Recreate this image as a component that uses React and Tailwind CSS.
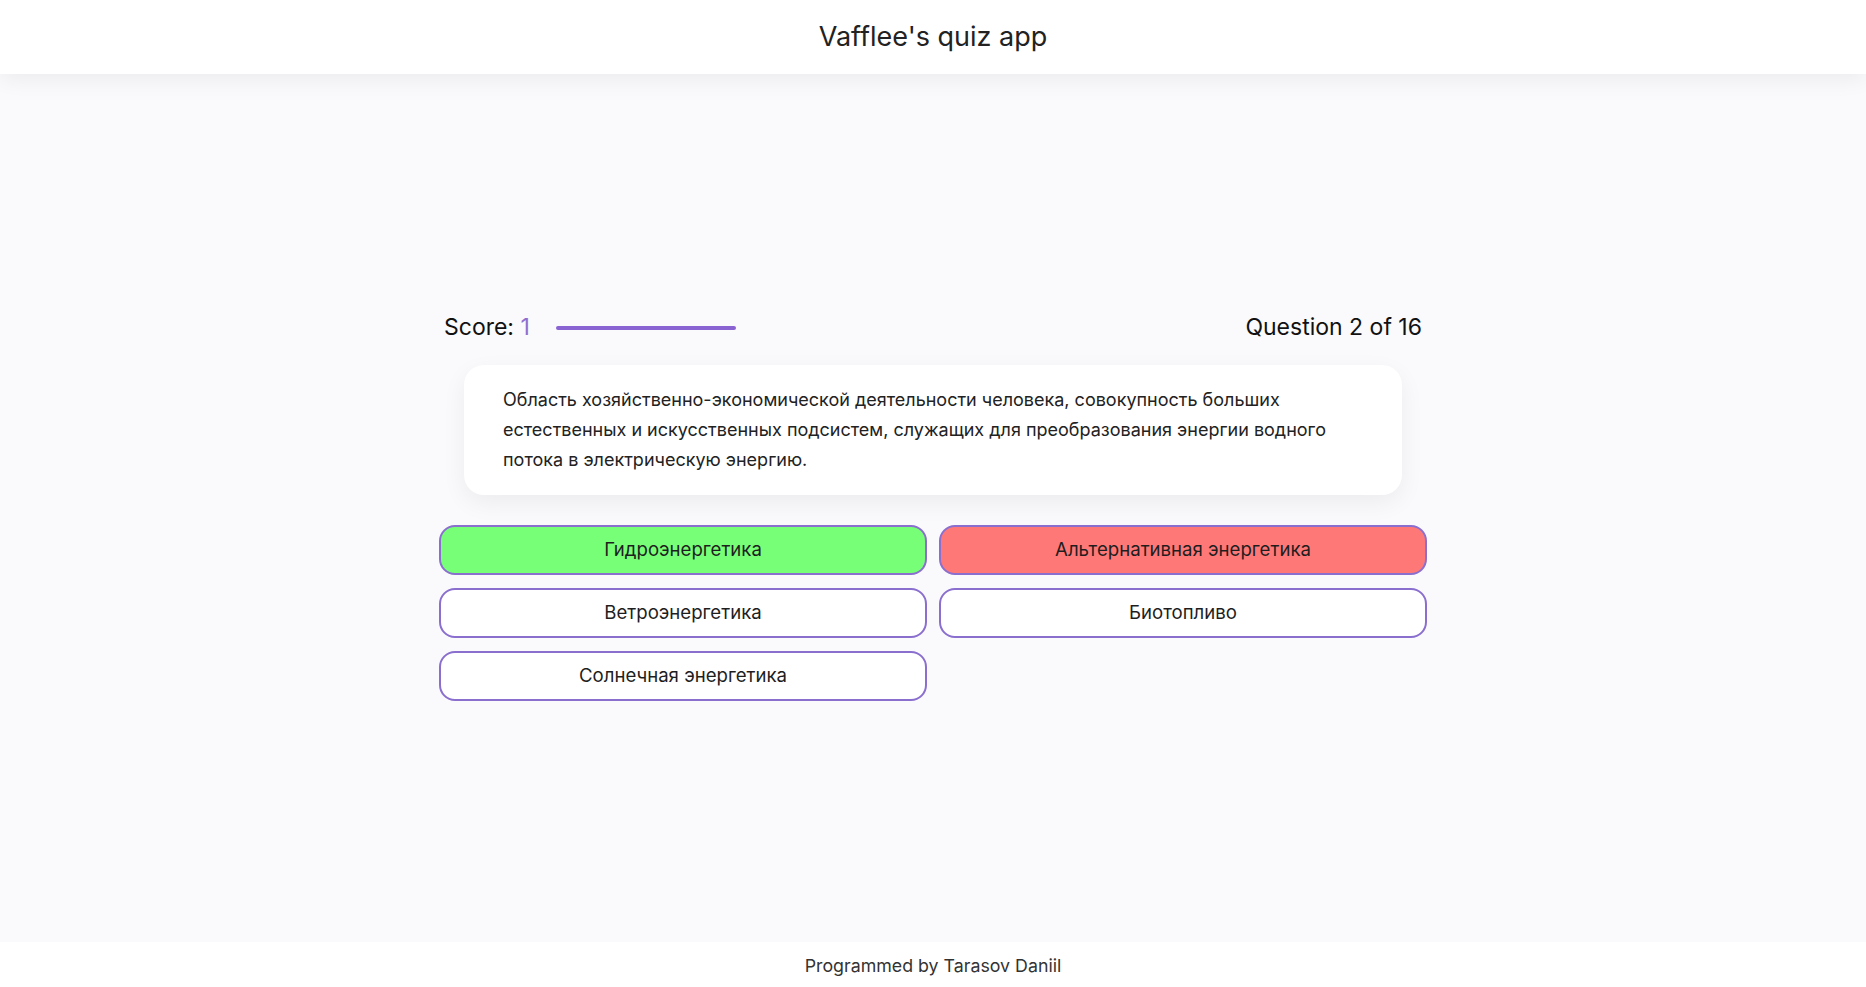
import React from 'react'

const answers = [
  { text: 'Гидроэнергетика', state: 'correct' },
  { text: 'Альтернативная энергетика', state: 'wrong' },
  { text: 'Ветроэнергетика', state: 'idle' },
  { text: 'Биотопливо', state: 'idle' },
  { text: 'Солнечная энергетика', state: 'idle' }
]

const AnswerButton = ({ text, state }) => {
  const bg =
    state === 'correct'
      ? 'bg-[#78ff78]'
      : state === 'wrong'
      ? 'bg-[#ff7878]'
      : 'bg-white'

  return (
    <button
      className={`h-[50px] w-full rounded-2xl border-2 border-[#8a6fcf] ${bg} text-[18.6px] text-[#1e1e1e] flex items-center justify-center`}
    >
      {text}
    </button>
  )
}

export default function App() {
  return (
    <div
      className="min-h-screen flex flex-col bg-[#faf9fc] text-[#111]"
      style={{ fontFamily: 'Inter, "Noto Sans", sans-serif' }}
    >
      {/* Header */}
      <header className="h-[74px] bg-white shadow-[0_6px_20px_rgba(0,0,0,0.06)] flex items-center justify-center relative z-10">
        <h1 className="text-[27px] text-[#222]">Vafflee's quiz app</h1>
      </header>

      {/* Quiz */}
      <main className="flex-1 flex items-center justify-center">
        <div className="w-[988px] -mt-[5px]">
          <div className="flex items-center justify-between h-[34px] px-[5px]">
            <div className="flex items-center">
              <span className="text-[23px]">
                Score: <span className="text-[#8e6fd0]">1</span>
              </span>
              <div className="ml-[26px] w-[180px] h-[4px] rounded-full bg-[#8a63d2]" />
            </div>
            <span className="text-[23px]">Question 2 of 16</span>
          </div>

          <div className="mx-[25px] mt-[20px] bg-white rounded-[20px] shadow-[0_8px_24px_rgba(0,0,0,0.06)] px-[39px] py-[20px] text-[18px] leading-[30px] text-[#222]">
            Область хозяйственно-экономической деятельности человека, совокупность больших
            естественных и искусственных подсистем, служащих для преобразования энергии водного
            потока в электрическую энергию.
          </div>

          <div className="grid grid-cols-2 gap-x-[12px] gap-y-[13px] mt-[30px]">
            {answers.map((a) => (
              <AnswerButton key={a.text} text={a.text} state={a.state} />
            ))}
          </div>
        </div>
      </main>

      {/* Footer */}
      <footer className="h-[45px] pt-[4px] bg-white flex items-center justify-center text-[17.8px] text-[#333]">
        Programmed by Tarasov Daniil
      </footer>
    </div>
  )
}
